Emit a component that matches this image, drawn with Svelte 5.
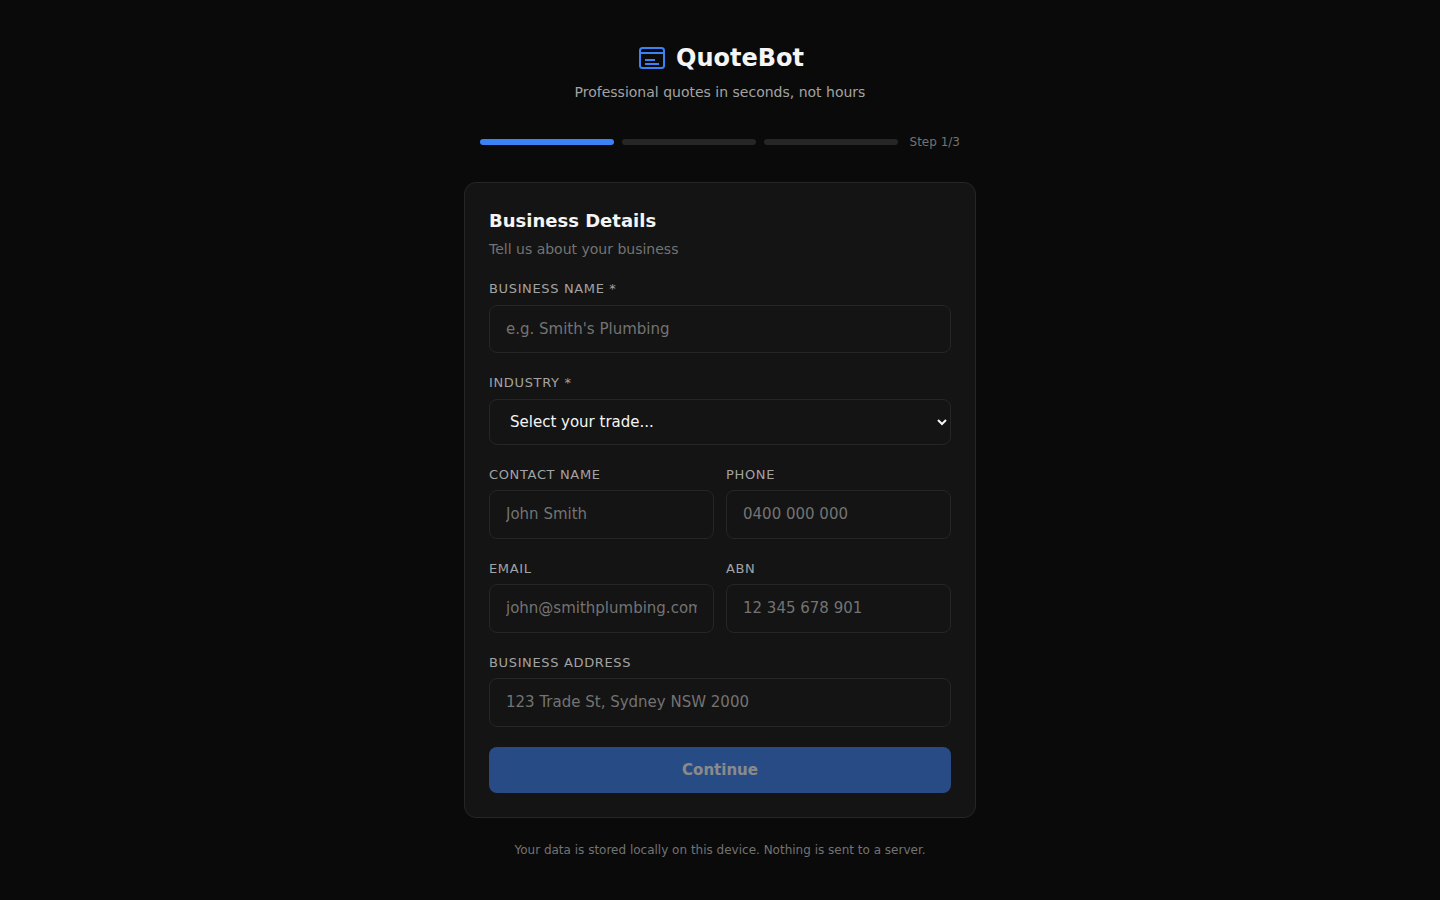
<script>
	let business = $state("");
	let industry = $state("");

	const trades = ["Plumbing", "Electrical", "Carpentry", "Landscaping"];
	let canContinue = $derived(business.trim() !== "" && industry !== "");
</script>

<main class="page">
	<header class="brand">
		<div class="logo">
			<svg width="32" height="32" viewBox="0 0 32 32" fill="none" stroke="#3b82f6" stroke-width="2" aria-hidden="true">
				<rect x="4" y="6" width="24" height="20" rx="2.5" />
				<path d="M4 11h24" />
				<path d="M9 18h10M9 22h14" />
			</svg>
			<h1>QuoteBot</h1>
		</div>
		<p>Professional quotes in seconds, not hours</p>
	</header>

	<div class="progress">
		<span class="bar active"></span>
		<span class="bar"></span>
		<span class="bar"></span>
		<span class="step">Step 1/3</span>
	</div>

	<form class="card" onsubmit={(e) => e.preventDefault()}>
		<h2>Business Details</h2>
		<p class="hint">Tell us about your business</p>

		<div class="field">
			<label for="business">Business Name *</label>
			<input id="business" placeholder="e.g. Smith's Plumbing" bind:value={business} />
		</div>

		<div class="field">
			<label for="industry">Industry *</label>
			<select id="industry" bind:value={industry}>
				<option value="">Select your trade...</option>
				{#each trades as trade}
					<option value={trade}>{trade}</option>
				{/each}
			</select>
		</div>

		<div class="row">
			<div class="field">
				<label for="contact">Contact Name</label>
				<input id="contact" placeholder="John Smith" />
			</div>
			<div class="field">
				<label for="phone">Phone</label>
				<input id="phone" placeholder="0400 000 000" />
			</div>
		</div>

		<div class="row">
			<div class="field">
				<label for="email">Email</label>
				<input id="email" placeholder="john@smithplumbing.com" />
			</div>
			<div class="field">
				<label for="abn">ABN</label>
				<input id="abn" placeholder="12 345 678 901" />
			</div>
		</div>

		<div class="field">
			<label for="address">Business Address</label>
			<input id="address" placeholder="123 Trade St, Sydney NSW 2000" />
		</div>

		<button type="submit" disabled={!canContinue}>Continue</button>
	</form>

	<p class="note">Your data is stored locally on this device. Nothing is sent to a server.</p>
</main>

<style>
	:global(body) {
		background: #0a0a0a;
		color: #f5f5f5;
		font-family: "DejaVu Sans", sans-serif;
	}

	.page {
		width: 512px;
		margin: 0 auto;
		padding-top: 40px;
		padding-bottom: 40px;
	}

	.brand {
		text-align: center;
		margin-bottom: 30px;
	}

	.logo {
		display: flex;
		align-items: center;
		justify-content: center;
		gap: 8px;
		margin-bottom: 6px;
	}

	h1 {
		margin: 0;
		font-size: 24px;
		line-height: 36px;
		font-weight: 700;
	}

	.brand p {
		margin: 0;
		font-size: 14px;
		line-height: 21px;
		color: #a3a3a3;
	}

	.progress {
		display: flex;
		align-items: center;
		gap: 8px;
		padding: 0 16px;
		margin-bottom: 31px;
	}

	.bar {
		flex: 1;
		height: 6px;
		border-radius: 3px;
		background: #262626;
	}

	.bar.active {
		background: #3b82f6;
	}

	.step {
		margin-left: 4px;
		font-size: 12px;
		line-height: 18px;
		color: #737373;
	}

	.card {
		background: #141414;
		border: 1px solid #262626;
		border-radius: 12px;
		padding: 24px;
	}

	h2 {
		margin: 0 0 5px;
		font-size: 18px;
		line-height: 27px;
		font-weight: 700;
	}

	.hint {
		margin: 0 0 19px;
		font-size: 14px;
		line-height: 21px;
		color: #737373;
	}

	.field {
		margin-bottom: 20px;
		min-width: 0;
	}

	label {
		display: block;
		margin-bottom: 6px;
		font-size: 13px;
		line-height: 19.5px;
		letter-spacing: 0.65px;
		text-transform: uppercase;
		color: #a3a3a3;
	}

	input,
	select {
		display: block;
		width: 100%;
		box-sizing: border-box;
		height: 48.5px;
		padding: 14px 16px;
		background: #141414;
		border: 1px solid #262626;
		border-radius: 8px;
		color: #f5f5f5;
		font-family: inherit;
		font-size: 15px;
		outline: none;
	}

	select {
		height: 46px;
		padding: 0 16px;
	}

	input::placeholder {
		color: #737373;
	}

	.row {
		display: grid;
		grid-template-columns: 1fr 1fr;
		gap: 12px;
	}

	button {
		display: block;
		width: 100%;
		height: 46px;
		border: none;
		border-radius: 8px;
		background: #3b82f6;
		color: #fff;
		font-family: inherit;
		font-size: 15px;
		font-weight: 700;
	}

	button:disabled {
		opacity: 0.5;
	}

	.note {
		margin: 23.5px 0 0;
		text-align: center;
		font-size: 12px;
		line-height: 18px;
		color: #737373;
	}
</style>
